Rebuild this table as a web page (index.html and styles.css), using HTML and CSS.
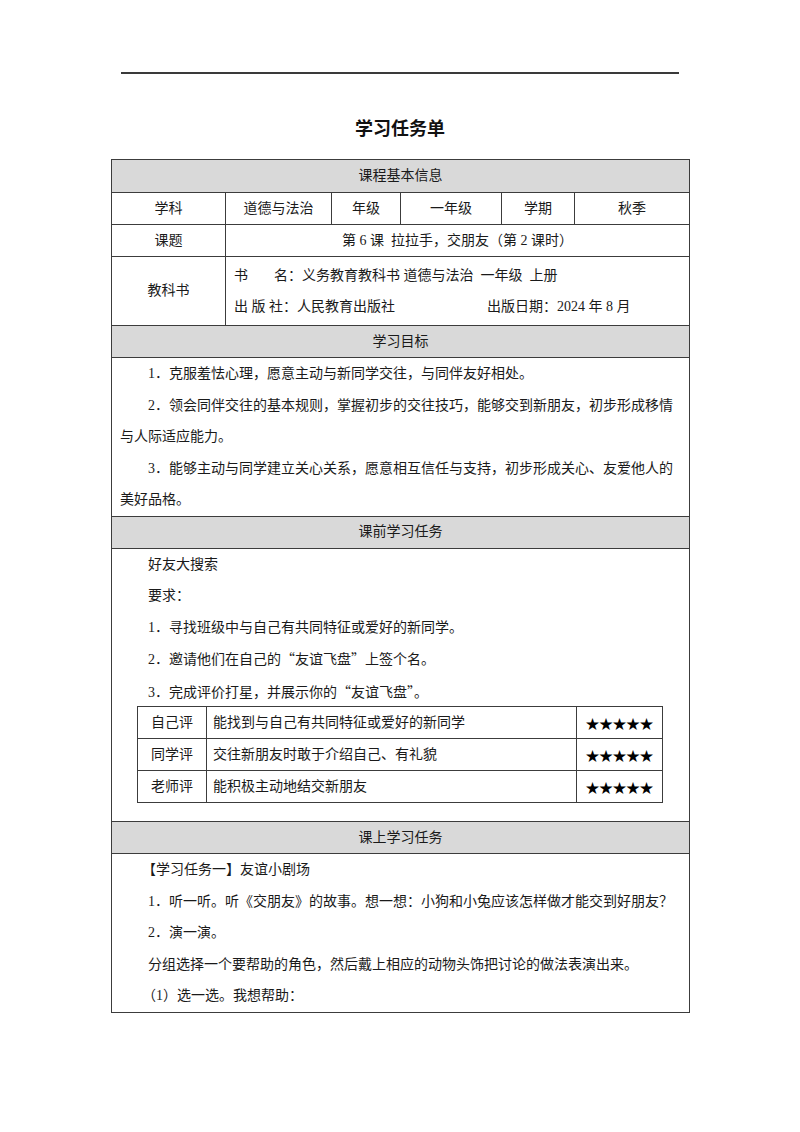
FILE: index.html
```html
<!DOCTYPE html>
<html lang="zh-CN">
<head>
<meta charset="utf-8">
<title>学习任务单</title>
<link rel="stylesheet" href="styles.css">
</head>
<body>
<div class="page">
  <div class="rule"></div>
  <h1 class="title">学习任务单</h1>
  <table class="sheet">
    <colgroup>
      <col class="c1"><col class="c2"><col class="c3"><col class="c4"><col class="c5"><col class="c6">
    </colgroup>
    <tr class="head head-first"><td colspan="6">课程基本信息</td></tr>
    <tr class="row">
      <td class="center">学科</td>
      <td class="center">道德与法治</td>
      <td class="center">年级</td>
      <td class="center">一年级</td>
      <td class="center">学期</td>
      <td class="center">秋季</td>
    </tr>
    <tr class="row">
      <td class="center">课题</td>
      <td class="center" colspan="5">第 6 课&nbsp; 拉拉手，交朋友（第 2 课时）</td>
    </tr>
    <tr class="row book">
      <td class="center">教科书</td>
      <td colspan="5" class="book-info">
        <div><span class="lbl-a">书</span><span class="lbl-b">名：</span>义务教育教科书 道德与法治&nbsp; 一年级&nbsp; 上册</div>
        <div><span class="pub">出 版 社：人民教育出版社</span>出版日期：2024 年 8 月</div>
      </td>
    </tr>
    <tr class="head"><td colspan="6">学习目标</td></tr>
    <tr>
      <td colspan="6" class="content">
        <p>1．克服羞怯心理，愿意主动与新同学交往，与同伴友好相处。</p>
        <p>2．领会同伴交往的基本规则，掌握初步的交往技巧，能够交到新朋友，初步形成移情与人际适应能力。</p>
        <p>3．能够主动与同学建立关心关系，愿意相互信任与支持，初步形成关心、友爱他人的美好品格。</p>
      </td>
    </tr>
    <tr class="head"><td colspan="6">课前学习任务</td></tr>
    <tr>
      <td colspan="6" class="content">
        <p>好友大搜索</p>
        <p>要求：</p>
        <p>1．寻找班级中与自己有共同特征或爱好的新同学。</p>
        <p>2．邀请他们在自己的<span class="cq">“</span>友谊飞盘<span class="cq">”</span>上签个名。</p>
        <p>3．完成评价打星，并展示你的<span class="cq">“</span>友谊飞盘<span class="cq">”</span>。</p>
        <table class="rate">
          <tr><td class="who">自己评</td><td class="desc">能找到与自己有共同特征或爱好的新同学</td><td class="stars">★★★★★</td></tr>
          <tr><td class="who">同学评</td><td class="desc">交往新朋友时敢于介绍自己、有礼貌</td><td class="stars">★★★★★</td></tr>
          <tr><td class="who">老师评</td><td class="desc">能积极主动地结交新朋友</td><td class="stars">★★★★★</td></tr>
        </table>
      </td>
    </tr>
    <tr class="head"><td colspan="6">课上学习任务</td></tr>
    <tr>
      <td colspan="6" class="content">
        <p class="shift">【学习任务一】友谊小剧场</p>
        <p>1．听一听。听《交朋友》的故事。想一想：小狗和小兔应该怎样做才能交到好朋友？</p>
        <p>2．演一演。</p>
        <p>分组选择一个要帮助的角色，然后戴上相应的动物头饰把讨论的做法表演出来。</p>
        <p class="shift">（1）选一选。我想帮助：</p>
      </td>
    </tr>
  </table>
</div>
</body>
</html>
```

FILE: styles.css
```css
html, body {
  margin: 0;
  padding: 0;
  background: #ffffff;
}

body {
  font-family: "Liberation Serif", "Noto Sans CJK SC", serif;
  font-size: 14px;
  color: #1a1a1a;
}

.page {
  width: 578px;
  margin: 0 auto;
  padding-top: 72px;
}

.rule {
  width: 558px;
  margin: 0 auto;
  border-top: 2px solid #3a3a3a;
}

.title {
  margin: 41px 0 20px;
  text-align: center;
  font-family: "Noto Sans CJK SC", sans-serif;
  font-size: 18px;
  font-weight: 700;
  line-height: 24px;
  color: #111;
}

.sheet {
  width: 578px;
  border-collapse: collapse;
  table-layout: fixed;
}

.sheet > tbody > tr > td {
  border: 1px solid #3c3c3c;
  padding: 0 8px;
  vertical-align: middle;
}

.c1 { width: 114px; }
.c2 { width: 106px; }
.c3 { width: 69px; }
.c4 { width: 101px; }
.c5 { width: 73px; }
.c6 { width: 115px; }

.head td {
  background: #d9d9d9;
  text-align: center;
  height: 31px;
  line-height: 20px;
}

.head-first td {
  height: 32px;
}

.row td {
  height: 31px;
  line-height: 20px;
}

.center {
  text-align: center;
}

.book td {
  height: 68px;
}

.book-info {
  line-height: 31.5px !important;
}

.lbl-a {
  display: inline-block;
  width: 40px;
}

.pub {
  display: inline-block;
  width: 253px;
}

.content {
  line-height: 31.5px;
  padding: 0 8px !important;
}

.content p {
  margin: 0;
  text-indent: 2em;
}

.content p.shift {
  text-indent: calc(2em - 6px);
}

.cq {
  font-family: "Noto Sans CJK SC", sans-serif;
}

.rate {
  width: 526px;
  margin: -2px 0 18px 17px;
  border-collapse: collapse;
  table-layout: fixed;
  line-height: 20px;
}

.rate td {
  border: 1px solid #3c3c3c;
  height: 31px;
  padding: 0;
  vertical-align: middle;
}

.rate .who {
  width: 68px;
  text-align: center;
}

.rate .desc {
  padding-left: 6px;
}

.rate .stars {
  width: 85px;
  text-align: center;
  font-family: "Noto Sans CJK SC", sans-serif;
  font-size: 13.5px;
  color: #000;
}
```
